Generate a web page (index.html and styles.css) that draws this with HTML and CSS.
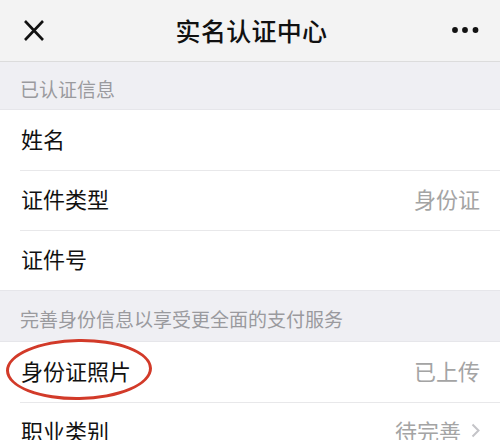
FILE: index.html
```html
<!DOCTYPE html>
<html lang="zh-CN">
<head>
    <meta charset="UTF-8">
    <meta name="viewport" content="width=device-width, initial-scale=1.0">
    <title>实名认证中心</title>
    <link rel="stylesheet" href="styles.css">
</head>
<body>
    <div class="nav-bar">
        <span class="nav-close">
            <svg width="22" height="22" viewBox="0 0 22 22">
                <path d="M2 1 L20 20 M20 1 L2 20" stroke="#111" stroke-width="2.6" fill="none"/>
            </svg>
        </span>
        <div class="nav-title">实名认证中心</div>
        <span class="nav-more">
            <svg width="28" height="8" viewBox="0 0 28 8">
                <circle cx="4" cy="4" r="2.9" fill="#111"/>
                <circle cx="14" cy="4" r="2.9" fill="#111"/>
                <circle cx="24.5" cy="4" r="2.9" fill="#111"/>
            </svg>
        </span>
    </div>

    <div class="group-title first">已认证信息</div>
    <div class="cell-group">
        <div class="cell"><span class="cell-label">姓名</span></div>
        <div class="cell"><span class="cell-label">证件类型</span><span class="cell-value">身份证</span></div>
        <div class="cell"><span class="cell-label">证件号</span></div>
    </div>

    <div class="group-title">完善身份信息以享受更全面的支付服务</div>
    <div class="cell-group">
        <div class="cell">
            <span class="cell-label">身份证照片</span><span class="cell-value">已上传</span>
            <span class="mark-circle"></span>
        </div>
        <div class="cell">
            <span class="cell-label">职业类别</span>
            <span class="cell-value">待完善</span>
            <svg class="cell-arrow" width="9" height="15" viewBox="0 0 9 15">
                <path d="M1.5 1.5 L7.5 7.5 L1.5 13.5" stroke="#c4c4c8" stroke-width="2" fill="none"/>
            </svg>
        </div>
    </div>
</body>
</html>
```

FILE: styles.css
```css
body {
    margin: 0;
    background: #efeff3;
    font-family: "Noto Sans CJK SC", "Noto Sans", sans-serif;
    color: #111;
}
.nav-bar {
    height: 61px;
    display: grid;
    grid-template-columns: 1fr auto 1fr;
    align-items: center;
    padding: 0 20px 0 23px;
    background: #f3f3f3;
    border-bottom: 1px solid #dcdcdc;
}
.nav-close {
    display: flex;
    margin-top: 1px;
}
.nav-title {
    font-size: 25px;
    font-weight: 500;
    letter-spacing: 0.3px;
    margin-top: -2px;
}
.nav-more {
    display: flex;
    justify-content: flex-end;
    margin-top: -1px;
    margin-right: 1px;
}
.group-title {
    padding: 18px 20px 12px;
    line-height: 20px;
    font-size: 19px;
    color: #9a9a9e;
}
.group-title.first {
    padding-top: 17px;
    padding-bottom: 10px;
}
.cell-group {
    background: #fff;
    border-top: 1px solid #e6e6ea;
    border-bottom: 1px solid #e6e6ea;
}
.cell {
    position: relative;
    height: 60px;
    box-sizing: border-box;
    display: flex;
    align-items: center;
    padding: 0 20px 4px 21px;
    font-size: 22px;
}
.cell + .cell::before {
    content: "";
    position: absolute;
    top: 0;
    left: 20px;
    right: 0;
    border-top: 1px solid #e8e8ea;
}
.cell-label {
    flex: 1;
}
.cell-value {
    color: #a4a4a4;
}
.cell-arrow {
    margin-left: 10px;
}
.mark-circle {
    position: absolute;
    left: 6px;
    top: -3px;
    width: 140px;
    height: 55px;
    border: 3px solid #d23a29;
    border-radius: 50%;
    transform: rotate(-1deg);
}
```
